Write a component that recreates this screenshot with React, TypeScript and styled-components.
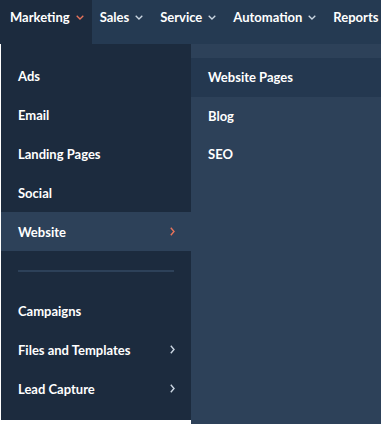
import React from "react";
import styled, { createGlobalStyle } from "styled-components";

const GlobalStyle = createGlobalStyle`
    html, body {
        margin: 0;
        padding: 0;
        background: #fff;
        overflow: hidden;
    }
    body {
        font-family: Lato, "Noto Sans", sans-serif;
        -webkit-font-smoothing: antialiased;
    }
`;

const Page = styled.div`
    width: 381px;
    height: 424px;
    display: flex;
    flex-direction: column;
    overflow: hidden;
`;

const NavBar = styled.nav`
    display: flex;
    height: 44px;
    background-color: #253a52;
    flex-shrink: 0;
`;

const NavItem = styled.div<{ active?: boolean }>`
    display: flex;
    align-items: flex-start;
    gap: 6px;
    padding: 9px ${props => (props.active ? "8px" : "9px")} 0
        ${props => (props.active ? "10px" : "8px")};
    background-color: ${props => (props.active ? "#1c2b3e" : "transparent")};
    color: #fff;
    font-size: 13px;
    font-weight: 700;
    line-height: 16px;
    white-space: nowrap;
    svg {
        margin-top: 6px;
    }
`;

const Dropdown = styled.div`
    display: flex;
    flex: 1;
    padding-left: 1px;
    align-items: flex-start;
`;

const MainColumn = styled.div`
    width: 190px;
    flex-shrink: 0;
    background-color: #1c2b3e;
    padding: 12px 0 12px;
`;

const SubPanel = styled.div`
    flex: 1;
    align-self: stretch;
    background-color: #2d4159;
    padding-top: 14px;
`;

const Row = styled.div<{ selected?: boolean; tone?: "main" | "sub" }>`
    display: flex;
    align-items: center;
    justify-content: space-between;
    height: 39px;
    padding: 0 16px 0 17px;
    color: #fff;
    font-size: 13px;
    font-weight: 700;
    background-color: ${props =>
        props.selected
            ? props.tone === "sub"
                ? "#243850"
                : "#2d4159"
            : "transparent"};
`;

const SubRow = styled(Row)`
    height: 38.5px;
`;

const Divider = styled.hr`
    margin: 19px 17px 19px 17px;
    border: none;
    height: 2px;
    background-color: #2d4159;
`;

const ChevronDown = ({ color }: { color: string }) => (
    <svg width="8" height="5" viewBox="0 0 8 5">
        <path d="M0.7 0.7 L4 4 L7.3 0.7" fill="none" stroke={color} strokeWidth="1.3" />
    </svg>
);

const ChevronRight = ({ color }: { color: string }) => (
    <svg width="5" height="9" viewBox="0 0 5 9">
        <path d="M0.8 0.8 L4 4.5 L0.8 8.2" fill="none" stroke={color} strokeWidth="1.4" />
    </svg>
);

const navItems = ["Marketing", "Sales", "Service", "Automation", "Reports"];

type MenuItem = { label: string; hasChildren?: boolean };

const topItems: MenuItem[] = [
    { label: "Ads" },
    { label: "Email" },
    { label: "Landing Pages" },
    { label: "Social" },
    { label: "Website", hasChildren: true },
];

const bottomItems: MenuItem[] = [
    { label: "Campaigns" },
    { label: "Files and Templates", hasChildren: true },
    { label: "Lead Capture", hasChildren: true },
];

const subItems = ["Website Pages", "Blog", "SEO"];

const App = () => {
    const activeNav = "Marketing";
    const openItem = "Website";
    const activeSub = "Website Pages";

    const renderItem = (item: MenuItem) => {
        const open = item.label === openItem;
        return (
            <Row key={item.label} selected={open}>
                <span>{item.label}</span>
                {item.hasChildren ? (
                    <ChevronRight color={open ? "#e8735a" : "#cbd6e2"} />
                ) : null}
            </Row>
        );
    };

    return (
        <Page>
            <GlobalStyle />
            <NavBar>
                {navItems.map(name => (
                    <NavItem key={name} active={name === activeNav}>
                        <span>{name}</span>
                        {name !== "Reports" ? (
                            <ChevronDown
                                color={name === activeNav ? "#e8735a" : "#cbd6e2"}
                            />
                        ) : null}
                    </NavItem>
                ))}
            </NavBar>
            <Dropdown>
                <MainColumn>
                    {topItems.map(renderItem)}
                    <Divider />
                    {bottomItems.map(renderItem)}
                </MainColumn>
                <SubPanel>
                    {subItems.map(name => (
                        <SubRow key={name} tone="sub" selected={name === activeSub}>
                            <span>{name}</span>
                        </SubRow>
                    ))}
                </SubPanel>
            </Dropdown>
        </Page>
    );
};

export default App;
